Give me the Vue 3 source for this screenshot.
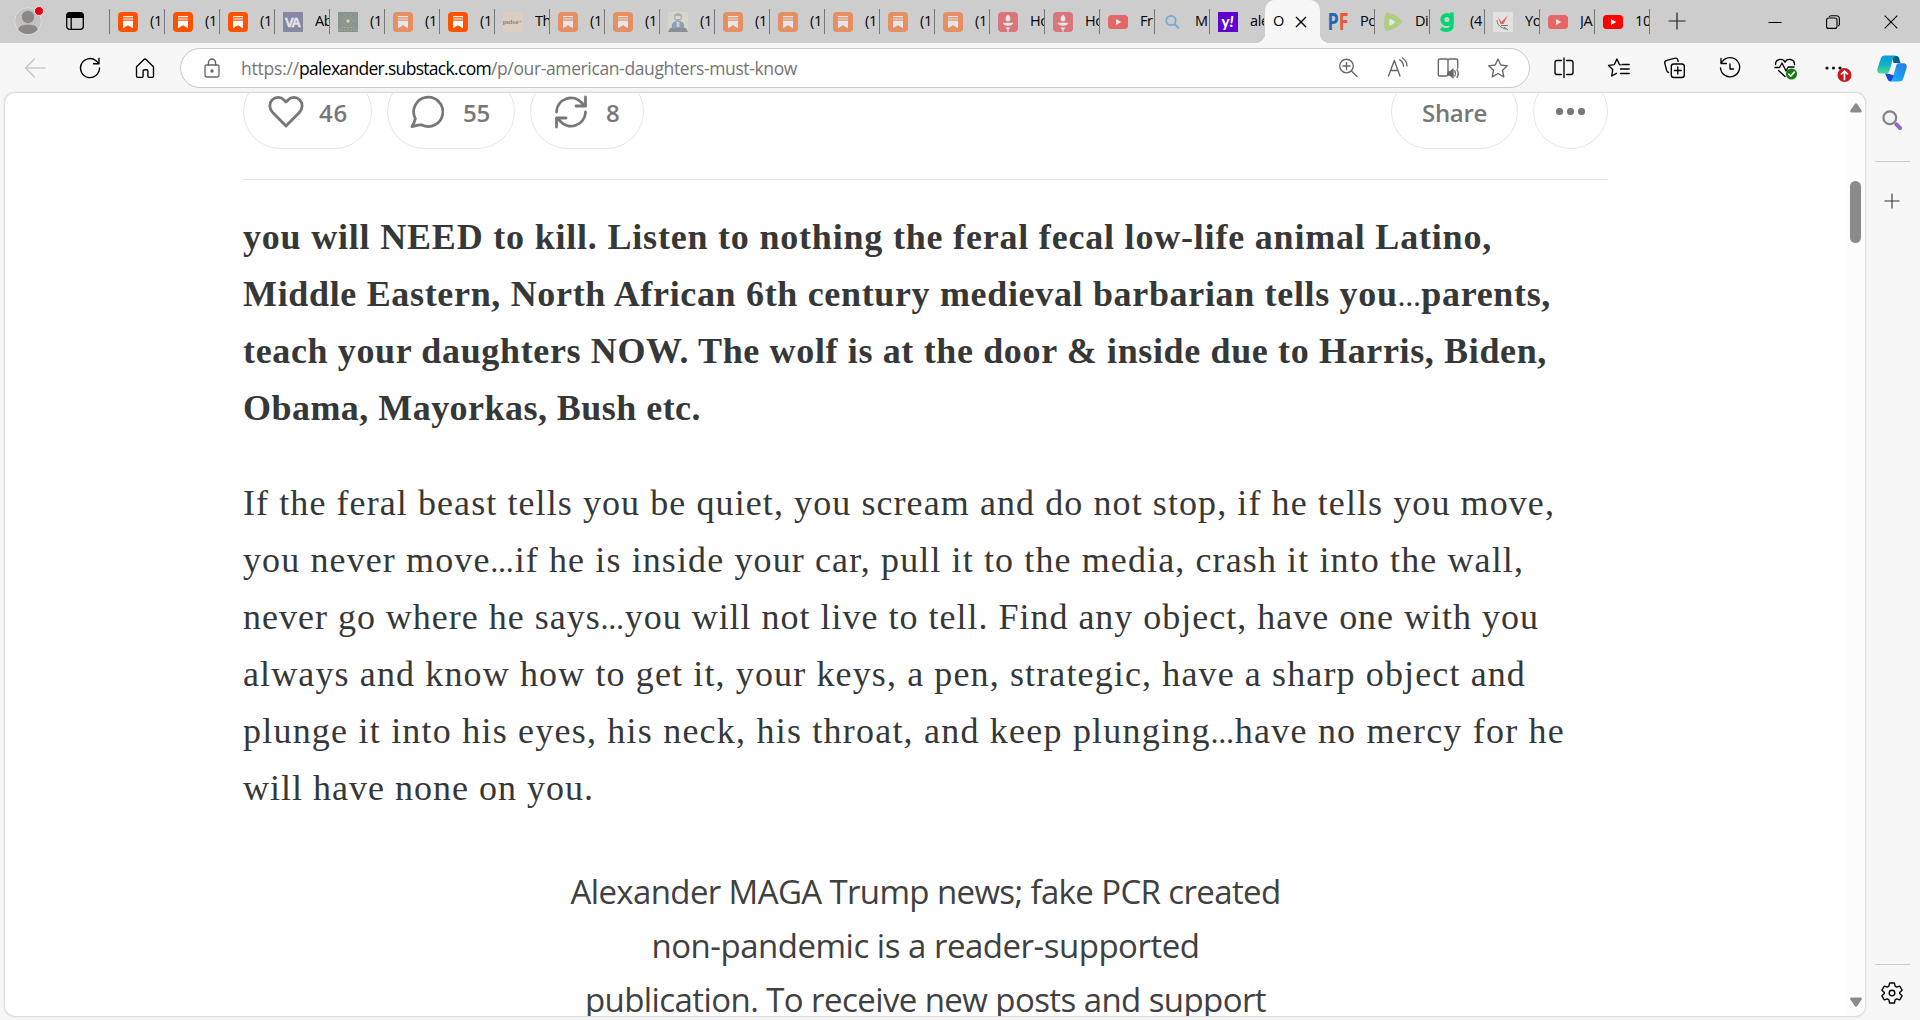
<template>
  <div class="browser">
    <!-- Tab strip -->
    <header class="tab-strip">
      <div class="strip-left">
        <svg class="profile" viewBox="0 0 32 32" width="32" height="32">
          <circle cx="14" cy="18" r="13.4" fill="#c4c2c0" stroke="#dedede" />
          <circle cx="14" cy="14" r="6.2" fill="#8a8886" />
          <path d="M4.2 26.8C5 22.6 9 21.8 14 21.8s9 .8 9.8 5A13 13 0 0 1 14 31a13 13 0 0 1-9.8-4.2z" fill="#8a8886" />
          <circle cx="25" cy="8" r="4.5" fill="#e3000b" stroke="#f0dede" />
        </svg>
        <svg class="workspace" viewBox="0 0 18 18" width="18" height="18">
          <rect x=".7" y=".7" width="16.6" height="16.6" rx="3" fill="none" stroke="#000" stroke-width="1.3" />
          <path d="M.5 6V3.2A2.7 2.7 0 0 1 3.2.5h11.6a2.7 2.7 0 0 1 2.7 2.7V6z" />
          <path d="M5.2 6v11.5" stroke="#000" stroke-width="1.3" />
        </svg>
      </div>
      <div
        v-for="(tab, i) in tabs"
        :key="i"
        class="tab"
        :class="{ active: tab.active, 'no-line': tab.noLine }"
      >
        <template v-if="tab.active">
          <span class="tab-title">O</span>
          <svg class="tab-close" viewBox="0 0 12 12" width="12" height="12"><path d="M1 1l10 10M11 1L1 11" stroke="#000" stroke-width="1.4" /></svg>
        </template>
        <template v-else>
          <svg class="favicon" :class="{ faded: tab.faded }" viewBox="0 0 20 20" width="20" height="20" v-html="favicons[tab.icon]"></svg>
          <span class="tab-title">{{ tab.title }}</span>
        </template>
      </div>
      <svg class="new-tab" viewBox="0 0 18 18" width="18" height="18"><path d="M9 .5v17M.5 9h17" stroke="#222" stroke-width="1.2" /></svg>
      <div class="window-controls">
        <svg viewBox="0 0 14 14" width="14" height="14"><path d="M.5 7.5h13" stroke="#000" /></svg>
        <svg viewBox="0 0 14 14" width="14" height="14"><rect x=".6" y="3" width="10.4" height="10.4" rx="2" fill="none" stroke="#000" stroke-width="1.1" /><path d="M3 1.9C3.4 1 4 .7 5 .7h5.5a2.9 2.9 0 0 1 2.9 2.9V9c0 1-.4 1.7-1.2 2" fill="none" stroke="#000" stroke-width="1.1" /></svg>
        <svg viewBox="0 0 14 14" width="14" height="14"><path d="M.7.7l12.6 12.6M13.3.7L.7 13.3" stroke="#000" stroke-width="1.1" /></svg>
      </div>
    </header>

    <!-- Toolbar -->
    <nav class="toolbar">
      <div class="nav-buttons">
        <svg v-for="name in navIcons" :key="name" class="icon" :class="name" viewBox="0 0 24 24" width="24" height="24" v-html="icons[name]"></svg>
      </div>
      <div class="address-bar">
        <svg class="icon muted" viewBox="0 0 24 24" width="24" height="24" v-html="icons.lock"></svg>
        <div class="url">
          <span v-fit="58" class="dim">https://</span><span v-fit="192">palexander.substack.com</span><span v-fit="306" class="dim">/p/our-american-daughters-must-know</span>
        </div>
        <div class="address-actions">
          <svg v-for="name in addressIcons" :key="name" class="icon muted" viewBox="0 0 24 24" width="24" height="24" v-html="icons[name]"></svg>
        </div>
      </div>
      <div class="toolbar-actions">
        <svg v-for="name in actionIcons" :key="name" class="icon" viewBox="0 0 24 24" width="24" height="24" v-html="icons[name]"></svg>
      </div>
      <svg class="copilot" viewBox="0 0 30 27" width="30" height="27">
        <defs>
          <linearGradient id="cpA" x1="0" y1="0" x2="0" y2="1"><stop offset="0" stop-color="#0a9fd8" /><stop offset=".5" stop-color="#12b0c8" /><stop offset="1" stop-color="#4fdc8a" /></linearGradient>
          <linearGradient id="cpB" x1="1" y1="0" x2="0" y2="1"><stop offset="0" stop-color="#2a78e0" /><stop offset="1" stop-color="#14b4ff" /></linearGradient>
        </defs>
        <path d="M15 1h4.500c2 0 2.500 1.500 3 3.500l1 3.500h-7z" fill="#06608a" />
        <path d="M8 18l2 5c.8 2.500 2 3.500 4 3.500l4-6z" fill="#1548d4" />
        <path d="M8 .5h11c-2 .8-2.800 2.300-3.400 4.500l-2.800 10c-.8 2.500-2 3.500-4.300 3.500H3.500C.8 18.500-.2 16.500.5 13.500L3.600 4C4.400 1.600 5.600.5 8 .5z" fill="url(#cpA)" />
        <path d="M21.500 8.200h5c2.700 0 3.700 2 3 5L26.400 23c-.8 2.400-2 3.500-4.400 3.500h-9c2-.8 2.400-2 3-4l2.800-10.500c.6-2.500 1-3.800 2.700-3.800z" fill="url(#cpB)" />
      </svg>
    </nav>

    <div class="content">
      <!-- Page viewport -->
      <main class="page">
        <article class="post">
          <div class="post-actions">
            <button class="pill like">
              <svg viewBox="0 0 36 34" width="36" height="34"><path d="M18 31L4.500 17.200C1 13.500 1 8 4.300 4.800c3.400-3.300 8.600-3 11.700.2l2 2.100 2-2.100c3.100-3.200 8.300-3.500 11.700-.2 3.300 3.200 3.300 8.700-.2 12.400z" /></svg>
              <span v-fit="29">46</span>
            </button>
            <button class="pill comment">
              <svg viewBox="0 0 34 34" width="34" height="34"><path d="M5.300 23.600A14.600 14.600 0 1 1 11.900 30c-3-.5-6 .6-9.900 1.600 1.700-3 2.800-5.600 3.300-8z" /></svg>
              <span v-fit="27">55</span>
            </button>
            <button class="pill restack">
              <svg viewBox="0 0 34 34" width="34" height="34"><path d="M2.500 17A14.500 14.500 0 0 1 28 8l3.500 3M31.500 2v9h-9.500M31.500 17A14.500 14.500 0 0 1 6 26l-3.500-3M2.500 32v-9H12" /></svg>
              <span>8</span>
            </button>
            <button class="pill share"><span v-fit="65">Share</span></button>
            <button class="pill more"><i></i><i></i><i></i></button>
          </div>

          <div class="post-body">
            <p class="strong">
              <span v-for="line in boldLines" :key="line.text" v-fit="line.width" class="line"><template v-for="(part, i) in line.text.split('…')" :key="i"><span v-if="i" class="dots">…</span>{{ part }}</template></span>
            </p>
            <p>
              <span v-for="line in bodyLines" :key="line.text" v-fit="line.width" class="line"><template v-for="(part, i) in line.text.split('…')" :key="i"><span v-if="i" class="dots">…</span>{{ part }}</template></span>
            </p>
          </div>

          <div class="subscribe">
            <span v-for="line in subscribeLines" :key="line.text" v-fit="line.width" class="line">{{ line.text }}</span>
          </div>
        </article>

        <div class="scrollbar">
          <svg viewBox="0 0 12 10" width="12" height="10"><path d="M5 .8Q6-.2 7 .8L11.700 7.500Q12.300 9.300 10.500 9.500h-9Q-.3 9.300.3 7.500z" fill="#8b8b8b" /></svg>
          <div class="thumb"></div>
          <svg class="down" viewBox="0 0 12 10" width="12" height="10"><path d="M5 9.200Q6 10.200 7 9.200L11.700 2.500Q12.300.7 10.500.5h-9Q-.3.7.3 2.500z" fill="#8b8b8b" /></svg>
        </div>
      </main>

      <!-- Edge sidebar -->
      <aside class="sidebar">
        <svg viewBox="0 0 20 20" width="20" height="20"><circle cx="7.800" cy="7.800" r="6.400" fill="#f3f3f3" stroke="#858585" stroke-width="2.200" /><path d="M14.400 14.400l3.700 3.700" stroke="#9a62cf" stroke-width="4" stroke-linecap="round" /></svg>
        <hr />
        <svg class="plus" viewBox="0 0 16 16" width="16" height="16"><path d="M8 .5v15M.5 8h15" stroke="#333" stroke-width="1.100" /></svg>
        <hr class="bottom-rule" />
        <svg class="icon gear" viewBox="0 0 24 24" width="24" height="24" v-html="icons.gear"></svg>
      </aside>
    </div>
  </div>
</template>

<script setup>
// Spreads a line of text over a given width with letter spacing
const vFit = {
  mounted(el, { value }) {
    const natural = el.getBoundingClientRect().width
    const count = el.textContent.length
    el.style.letterSpacing = `${(value - natural) / count}px`
  }
}

const stack = (title = '(1', faded = false) => ({ icon: 'substack', title, faded })

const tabs = [
  stack(),
  stack(),
  stack(),
  { icon: 'va', title: 'Ab', faded: true },
  { icon: 'mandala', title: '(1', faded: true },
  stack('(1', true),
  stack(),
  { icon: 'pulse', title: 'Th' },
  stack('(1', true),
  stack('(1', true),
  { icon: 'person', title: '(1', faded: true },
  stack('(1', true),
  stack('(1', true),
  stack('(1', true),
  stack('(1', true),
  stack('(1', true),
  { icon: 'torch', title: 'Ho', faded: true },
  { icon: 'torch', title: 'Ho', faded: true },
  { icon: 'youtube', title: 'Fr', faded: true },
  { icon: 'search', title: 'M' },
  { icon: 'yahoo', title: 'ale', noLine: true },
  { active: true },
  { icon: 'pf', title: 'Po' },
  { icon: 'rumble', title: 'Di', faded: true },
  { icon: 'gab', title: '(4' },
  { icon: 'bird', title: 'Yo' },
  { icon: 'youtube', title: 'JA', faded: true },
  { icon: 'youtube', title: '10' }
]

const favicons = {
  substack: '<rect width="20" height="20" rx="4" fill="#ff5200"/><path d="M5 4.600h10M5 7h10" stroke="#fff" stroke-width="1.100"/><path d="M5 8.700h10V16.300L10 13.200 5 16.300z" fill="#fff"/>',
  va: '<rect width="20" height="20" fill="#41457a"/><text x="10" y="14.800" text-anchor="middle" font-family="Liberation Sans" font-weight="700" font-size="13" textLength="16" stroke="#fff" stroke-width=".4" fill="#fff">VA</text>',
  mandala: '<rect width="20" height="20" fill="#3f5d52"/><circle cx="10" cy="9" r="7" fill="none" stroke="#857a58" stroke-dasharray="2 1.500"/><circle cx="10" cy="9" r="4.500" fill="none" stroke="#a4855b" stroke-dasharray="1 1"/><circle cx="10" cy="9" r="2" fill="#c69a5c"/><path d="M0 18h20M3 15.500h14" stroke="#8a8060" stroke-dasharray="2 1"/><circle cx="10" cy="9" r="1" fill="#fff"/>',
  pulse: '<rect width="20" height="20" fill="#dccfc2"/><text x="9.500" y="12" text-anchor="middle" font-family="Liberation Serif" font-weight="700" font-size="7" fill="#8d8580">pulse<tspan fill="#e58b78">+</tspan></text>',
  person: '<rect width="20" height="20" fill="#dfe2cb"/><path d="M0 20l2-4h16l2 4z" fill="#4f535e"/><path d="M4 16c-1-4 1-7 6-7s7 3 6 7z" fill="#4377ad"/><circle cx="10" cy="5" r="4" fill="#8d949c"/><path d="M7.500 4h5v3h-5z" fill="#e6e6e6"/><path d="M8.500 10h3v5h-3z" fill="#e8c9a0"/>',
  torch: '<rect width="20" height="20" rx="4" fill="#e5202c"/><path d="M10 2.500c2.200 2.300 2.800 3.500 2.300 5.200-.4 1-1.200 1.700-2.300 1.700s-1.900-.7-2.300-1.700C7.200 6 7.800 4.800 10 2.500z" fill="#fff"/><path d="M4.500 10.800h11q-1 3-5.500 3t-5.500-3zM7.500 15.500h5L11.500 17h-3zM9.200 17h1.600l-.4 3h-.8z" fill="#fff"/>',
  youtube: '<rect y="3" width="20" height="14" rx="3.500" fill="#f00"/><path d="M8 7l5.300 3L8 13z" fill="#fff"/>',
  search: '<circle cx="8" cy="8.500" r="4.700" fill="none" stroke="#77a9d6" stroke-width="1.700"/><path d="M11.500 12l4.300 4.200" stroke="#77a9d6" stroke-width="2"/>',
  yahoo: '<rect width="20" height="20" fill="#5f01d1"/><text x="9.500" y="14.500" text-anchor="middle" font-family="Lato" font-weight="900" font-size="15" fill="#fff">y<tspan font-style="italic">!</tspan></text>',
  pf: '<text x="-.5" y="17.500" font-family="Open Sans" font-weight="700" font-size="23" textLength="21" lengthAdjust="spacingAndGlyphs" fill="#2468b8">P<tspan fill="#f05438">F</tspan></text>',
  rumble: '<path d="M3.500.8C7 0 18 5.800 18.800 9.500 19 12.500 7.500 19.800 3.500 19.200.3 18 .3 2 3.500.8z" fill="#8fd03c"/><path d="M7 7c1.200 0 5 2 5 3.100S8.200 13.500 7 13.500 6 7 7 7z" fill="#fff"/>',
  gab: '<circle cx="9" cy="7.500" r="4.600" fill="none" stroke="#00d672" stroke-width="4"/><path d="M13.800.5v13.200c0 5-7.800 5.200-10.800 2.600" fill="none" stroke="#00d672" stroke-width="3.800"/>',
  bird: '<rect width="20" height="20" fill="#e3e1e0"/><path d="M5 5l3.500 5L15 3l-4.500 9-3 0z" fill="#e26464"/><path d="M4 8c0 5 4 8 9 9M8 13.500l7 0M11 15l4 3" fill="none" stroke="#777" stroke-width="1"/>'
}

const icons = {
  back: '<path d="M22 12H2.500M11.500 3L2.500 12l9 9"/>',
  reload: '<path d="M21.500 12A9.500 9.500 0 1 1 18 4.700l2.800 2.800M21 2.200v5.500h-5.500"/>',
  home: '<path d="M3.500 10.800L11 3.500q1-1 2 0l7.500 7.300v9.200q0 1.300-1.300 1.300h-3.200q-1.100 0-1.100-1.100V15q0-1.300-1.300-1.300h-1.200Q10.100 13.700 10.100 15v5.200q0 1.100-1.100 1.100H4.800q-1.300 0-1.300-1.300z"/>',
  lock: '<rect x="5" y="9" width="14" height="12" rx="1.800"/><path d="M8.500 9V6.500a3.500 3.500 0 0 1 7 0V9"/><circle cx="12" cy="15" r="1" fill="currentColor"/>',
  zoom: '<circle cx="10.500" cy="10" r="6.800"/><path d="M15.500 15l5.500 5.500M10.500 6.500v7M7 10h7"/>',
  read: '<path d="M2.500 20L8.300 4.500 14 20M4.500 14.500h7.600M13.800 3.800c2.500 1.400 3.600 3.500 3.700 6.500M16.500 2c3.200 2 4.500 4.600 4.500 8"/>',
  book: '<path d="M12 4.500v13.800M12 4.500Q12 3 10.500 3H3.500Q2.300 3 2.300 4.200v14.600Q2.300 20 3.500 20H10q2 0 2-1.700M12 4.500Q12 3 13.500 3h7q1.200 0 1.200 1.200V12"/><path d="M12 16h2l3-2.800v8.600L14 19h-2z" fill="currentColor"/><path d="M18.800 14.800q1.500 2.600 0 5.200M21 13.500q2.500 4 0 7.800"/>',
  star: '<path d="M12 3l2.800 6 6.600.8-4.900 4.500 1.300 6.500L12 17.500l-5.800 3.300 1.300-6.500-4.900-4.500 6.600-.8z"/>',
  split: '<path d="M9.500 4.500H5Q3 4.500 3 6.500v10q0 2 2 2h4.500M14.500 4.500H19q2 0 2 2v10q0 2-2 2h-4.500M12 2v19.500"/>',
  favorites: '<path d="M14.200 8.800l-1.700-.2L9.900 3 7.300 8.600l-5.800.8 4.200 4.200-1 6.400 4.800-2.700M15.500 8.500h6.700M13.500 13h8.700M13.500 17.500h8.700" stroke-linejoin="round"/>',
  collections: '<rect x="8.300" y="8" width="13" height="13.500" rx="2.500"/><path d="M14.800 11v7M11.300 14.500h7M5.500 16.500c-1-.3-1.500-1-1.800-2L1.800 7.300q-.5-2 1.400-2.600l9-2.500q1.900-.4 2.500 1.400l.4 1.800"/>',
  history: '<path d="M4 6a9.600 9.600 0 1 1-1.500 6M3 2.500v5h5.500M12 8v5h3.500"/>',
  health: '<path d="M12 6.200c-2-4.200-9.500-3.700-9.500 2.300M12 6.200c2-4.200 9.500-3.700 9.500 2.300M2 11.500h4.500L9 7l4 8 2.200-4H21M5.500 14.500l6.500 6"/><circle cx="18.500" cy="18" r="5.600" fill="#107c10" stroke="none"/><path d="M15.800 18.200l1.900 1.900 3.600-4" stroke="#fff" stroke-width="1.600"/>',
  more: '<g fill="#111" stroke="none"><circle cx="-1" cy="12" r="1.600"/><circle cx="5.500" cy="12" r="1.600"/><circle cx="12" cy="12" r="1.600"/></g><circle cx="16.500" cy="19" r="7" fill="#c81a1e" stroke="none"/><path d="M16.500 23.500v-8M13.500 18l3-3 3 3" stroke="#fff" stroke-width="1.700"/>',
  gear: '<circle cx="12" cy="12" r="2.800"/><path d="M9.600 2h4.800l.7 3.200 1.500.9 3.100-1 2.400 4.100-2.400 2.200v1.200l2.400 2.200-2.400 4.100-3.100-1-1.500.9-.7 3.200H9.600l-.7-3.200-1.500-.9-3.100 1-2.400-4.100 2.400-2.200v-1.200L1.900 9.200l2.400-4.100 3.100 1 1.500-.9z" stroke-linejoin="round"/>'
}

const navIcons = ['back', 'reload', 'home']
const addressIcons = ['zoom', 'read', 'book', 'star']
const actionIcons = ['split', 'favorites', 'collections', 'history', 'health', 'more']

const boldLines = [
  { text: 'you will NEED to kill. Listen to nothing the feral fecal low-life animal Latino,', width: 1249 },
  { text: 'Middle Eastern, North African 6th century medieval barbarian tells you…parents,', width: 1308 },
  { text: 'teach your daughters NOW. The wolf is at the door & inside due to Harris, Biden,', width: 1304 },
  { text: 'Obama, Mayorkas, Bush etc.', width: 458 }
]

const bodyLines = [
  { text: 'If the feral beast tells you be quiet, you scream and do not stop, if he tells you move,', width: 1312 },
  { text: 'you never move…if he is inside your car, pull it to the media, crash it into the wall,', width: 1281 },
  { text: 'never go where he says…you will not live to tell. Find any object, have one with you', width: 1296 },
  { text: 'always and know how to get it, your keys, a pen, strategic, have a sharp object and', width: 1283 },
  { text: 'plunge it into his eyes, his neck, his throat, and keep plunging…have no mercy for he', width: 1322 },
  { text: 'will have none on you.', width: 351 }
]

const subscribeLines = [
  { text: 'Alexander MAGA Trump news; fake PCR created', width: 710 },
  { text: 'non-pandemic is a reader-supported', width: 548 },
  { text: 'publication. To receive new posts and support', width: 681 }
]
</script>

<style>
body {
  margin: 0;
  overflow: hidden;
}
</style>

<style scoped>
.browser {
  display: flex;
  flex-direction: column;
  width: 1920px;
  height: 1020px;
  overflow: hidden;
  background: #f7f7f7;
  font-family: "Open Sans", "Noto Sans", sans-serif;
  color: #000;
}

svg {
  display: block;
  flex: none;
}

/* tab strip */
.tab-strip {
  display: flex;
  height: 43px;
  flex: none;
  background: #cdcdcd;
}

.strip-left {
  display: flex;
  box-sizing: border-box;
  width: 110px;
  padding-left: 14px;
  background: linear-gradient(#777, #777) right 9px / 1px 25px no-repeat;
}

.profile {
  margin-top: 3px;
}

.workspace {
  margin: 12px 0 0 20px;
}

.tab {
  display: flex;
  align-items: center;
  box-sizing: border-box;
  width: 55px;
  flex: none;
  padding-left: 8px;
  overflow: hidden;
  background: linear-gradient(#777, #777) right 9px / 1px 25px no-repeat;
}

.tab.no-line {
  background: none;
}

.favicon {
  margin-top: 1px;
}

.favicon.faded {
  opacity: 0.5;
}

.tab-title {
  margin: -1px 0 0 12px;
  width: 14px;
  font-size: 14.5px;
  line-height: 20px;
  letter-spacing: -0.4px;
  white-space: nowrap;
  overflow: hidden;
}

.tab.active {
  position: relative;
  overflow: visible;
  background: #f7f7f7;
  border-radius: 10px 10px 0 0;
}

.tab.active::before,
.tab.active::after {
  content: "";
  position: absolute;
  bottom: 0;
  left: -10px;
  width: 10px;
  height: 10px;
  background: radial-gradient(circle at 0 0, transparent 10px, #f7f7f7 10.5px);
}

.tab.active::after {
  left: auto;
  right: -10px;
  background: radial-gradient(circle at 100% 0, transparent 10px, #f7f7f7 10.5px);
}

.tab.active .tab-title {
  margin-left: 0;
}

.tab-close {
  margin-left: 8px;
}

.new-tab {
  margin: 12px 0 0 18px;
}

.window-controls {
  display: flex;
  align-items: center;
  gap: 44px;
  margin-left: auto;
  padding-right: 22px;
}

/* toolbar */
.toolbar {
  display: flex;
  align-items: center;
  height: 50px;
  flex: none;
}

.icon {
  fill: none;
  stroke: currentColor;
  stroke-width: 1.35;
  stroke-linecap: round;
  stroke-linejoin: round;
  overflow: visible;
}

.icon.muted {
  color: #666;
}

.icon.back {
  color: #c8c8c8;
}

.nav-buttons {
  display: flex;
  gap: 31px;
  width: 157px;
  padding-left: 23px;
}

.address-bar {
  display: flex;
  align-items: center;
  box-sizing: border-box;
  width: 1350px;
  height: 40px;
  padding: 0 19px 0 19px;
  background: #fff;
  border: 1px solid #c8c8c8;
  border-radius: 20px;
}

.url {
  display: flex;
  margin: -1px 0 0 17px;
  font-size: 17.5px;
  line-height: 24px;
  white-space: nowrap;
}

.dim {
  color: #757575;
}

.address-actions {
  display: flex;
  gap: 26px;
  margin-left: auto;
}

.toolbar-actions {
  display: flex;
  gap: 31.3px;
  margin-left: 22px;
}

.toolbar-actions .icon {
  margin-top: -1px;
}

.copilot {
  margin-left: 25px;
}

/* page */
.content {
  display: flex;
  flex: 1;
  min-height: 0;
}

.page {
  display: flex;
  box-sizing: border-box;
  width: 1860px;
  height: 923px;
  margin-left: 5px;
  overflow: hidden;
  background: #fff;
  border-radius: 10px;
  box-shadow: 0 0 2px 1px rgba(0, 0, 0, 0.14);
}

.post {
  width: 1365px;
  margin: -19px 238px 0;
  flex: none;
}

.post-actions {
  display: flex;
  gap: 15px;
  padding-bottom: 30px;
  border-bottom: 1px solid #e2e2e2;
}

.pill {
  display: flex;
  align-items: center;
  box-sizing: border-box;
  height: 75px;
  padding: 0;
  background: none;
  border: 1px solid #e4e4e4;
  border-radius: 38px;
  color: #777;
  font: 600 24px/36px "Open Sans", sans-serif;
}

.pill svg {
  fill: none;
  stroke: #777;
  stroke-width: 2.8;
  stroke-linecap: round;
  stroke-linejoin: round;
}

.pill span {
  padding-top: 2px;
}

.like {
  width: 129px;
  padding-left: 24px;
}

.like span {
  margin-left: 15px;
}

.comment {
  width: 128px;
  padding-left: 22px;
}

.comment span {
  margin-left: 19px;
}

.restack {
  width: 114px;
  padding-left: 23px;
}

.restack span {
  margin-left: 18px;
}

.share {
  width: 127px;
  margin-left: auto;
  padding-left: 30px;
}

.more {
  width: 75px;
  justify-content: center;
  gap: 4.5px;
}

.more i {
  width: 6.5px;
  height: 6.5px;
  border-radius: 50%;
  background: #777;
}

.post-body {
  margin-top: 29px;
  font: 36px/57px "Liberation Serif", serif;
  color: #363737;
}

.post-body p {
  margin: 0 0 38px;
}

.strong {
  font-weight: 700;
}

.line {
  display: block;
  width: max-content;
  white-space: nowrap;
}

.dots {
  font-size: 23px;
  font-weight: 700;
  line-height: 0;
}

.subscribe {
  display: flex;
  flex-direction: column;
  align-items: center;
  margin-top: 48px;
  font-size: 33px;
  line-height: 54px;
  color: #404040;
}

.scrollbar {
  display: flex;
  flex-direction: column;
  align-items: center;
  box-sizing: border-box;
  width: 19px;
  padding: 10px 0 9px;
  background: #fcfcfc;
}

.thumb {
  width: 11px;
  height: 62px;
  margin-top: 68px;
  border-radius: 6px;
  background: #8b8b8b;
}

.down {
  margin-top: auto;
}

/* sidebar */
.sidebar {
  display: flex;
  flex-direction: column;
  align-items: center;
  box-sizing: border-box;
  width: 54px;
  padding-top: 17px;
}

.sidebar hr {
  width: 35px;
  height: 1px;
  margin: 31px 0 0;
  border: 0;
  background: #ccc;
}

.plus {
  margin-top: 31px;
}

.sidebar .bottom-rule {
  margin-top: auto;
}

.gear {
  margin: 16px 0 15px;
}
</style>
